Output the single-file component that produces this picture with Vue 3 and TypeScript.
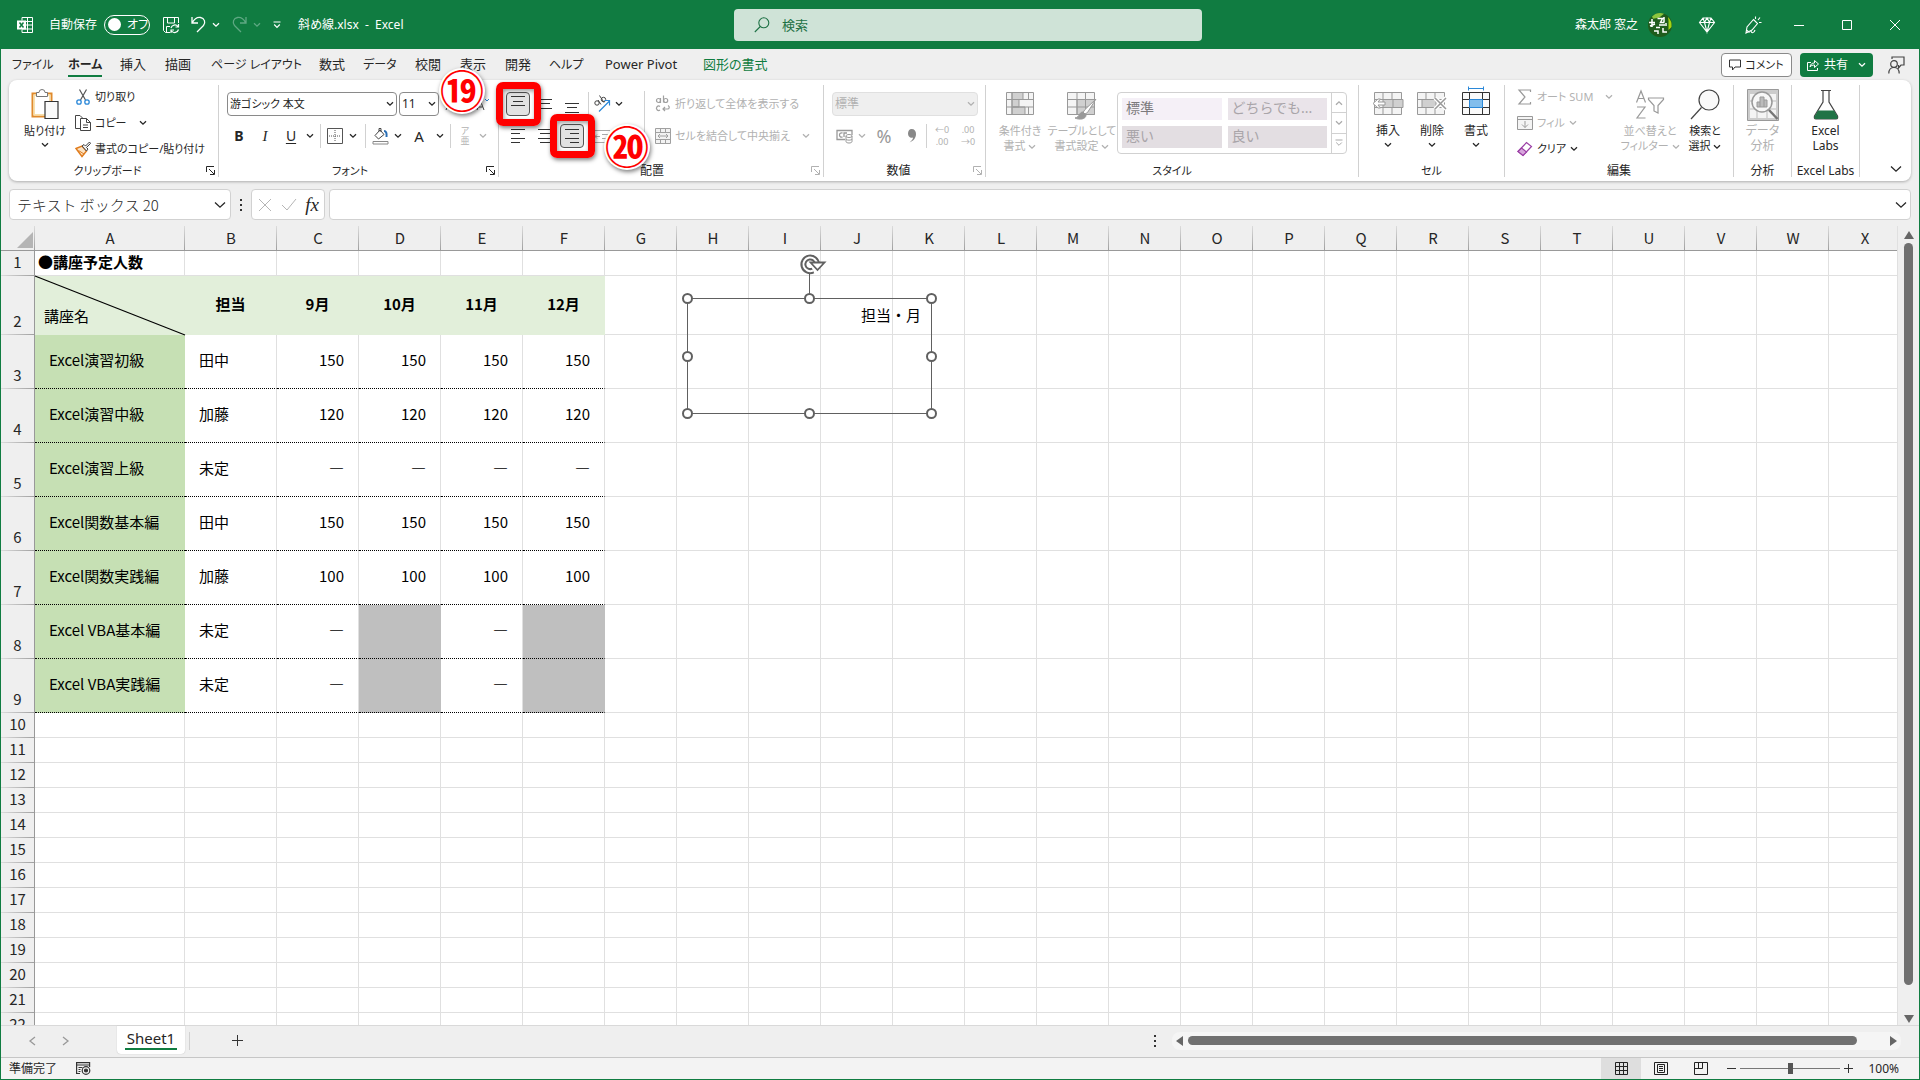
<script setup lang="ts">
import { h, ref } from 'vue'

interface Row {
  n: number
  height: number
  kind: 'title' | 'head' | 'data' | 'empty'
  cells: string[]
}

const Chevron = () =>
  h('svg', { width: 8, height: 6, viewBox: '0 0 8 6', fill: 'none', stroke: 'currentColor', 'stroke-width': 1.3, 'aria-hidden': 'true' }, [
    h('path', { d: 'M1 1.2 4 4.2 7 1.2' }),
  ])

const WideChevron = () =>
  h('svg', { width: 12, height: 8, viewBox: '0 0 12 8', fill: 'none', stroke: 'currentColor', 'stroke-width': 1.3, 'aria-hidden': 'true' }, [
    h('path', { d: 'M1 1.5 6 6.2 11 1.5' }),
  ])

const Launcher = () =>
  h('svg', { width: 9, height: 9, viewBox: '0 0 9 9', fill: 'none', stroke: 'currentColor', 'aria-hidden': 'true' }, [
    h('path', { d: 'M.5 6V.5H8M3 3l5 5M8.5 4v4.5H4' }),
  ])

const tabs = [
  { name: 'ファイル', width: 56, kana: true },
  { name: 'ホーム', width: 52, kana: true },
  { name: '挿入', width: 45 },
  { name: '描画', width: 46 },
  { name: 'ページ レイアウト', width: 108, kana: true },
  { name: '数式', width: 44 },
  { name: 'データ', width: 52, kana: true },
  { name: '校閲', width: 45 },
  { name: '表示', width: 45 },
  { name: '開発', width: 44 },
  { name: 'ヘルプ', width: 56, kana: true },
  { name: 'Power Pivot', width: 98 },
  { name: '図形の書式', width: 74 },
]
const activeTab = ref('ホーム')

const widths = [150, 92, 82, 82, 82, 82, ...Array.from({ length: 18 }, () => 72)]
const columns = widths.map((width, i) => ({ name: String.fromCharCode(65 + i), width }))
const tableWidth = widths.reduce((sum, w) => sum + w, 34)

const data: string[][] = [
  ['Excel演習初級', '田中', '150', '150', '150', '150'],
  ['Excel演習中級', '加藤', '120', '120', '120', '120'],
  ['Excel演習上級', '未定', '―', '―', '―', '―'],
  ['Excel関数基本編', '田中', '150', '150', '150', '150'],
  ['Excel関数実践編', '加藤', '100', '100', '100', '100'],
  ['Excel VBA基本編', '未定', '―', '', '―', ''],
  ['Excel VBA実践編', '未定', '―', '', '―', ''],
]

const rows: Row[] = [
  { n: 1, height: 25, kind: 'title', cells: ['●講座予定人数'] },
  { n: 2, height: 59, kind: 'head', cells: ['講座名', '担当', '9月', '10月', '11月', '12月'] },
  ...data.map((cells, i): Row => ({ n: i + 3, height: 54, kind: 'data', cells })),
  ...Array.from({ length: 13 }, (_, i): Row => ({ n: i + 10, height: 25, kind: 'empty', cells: [] })),
]

function cellClass(row: Row, col: number): string[] {
  if (col > 5 || row.kind === 'empty') return []
  if (row.kind === 'title') return col === 0 ? ['sheet-title'] : []
  if (row.kind === 'head') return ['head', col === 0 ? 'corner' : 'head-label']
  const out = ['body']
  if (col === 0) out.push('course')
  else if (col === 1) out.push('person')
  else out.push('count')
  if (col > 1 && !row.cells[col]) out.push('blocked')
  return out
}

const handles = [
  [6, 40], [128, 40], [250, 40],
  [6, 98], [250, 98],
  [6, 155], [128, 155], [250, 155],
]

const font = ref('游ゴシック 本文')
const fontSize = ref('11')
const autoSave = ref(false)
const zoom = ref(50)
</script>

<template>
  <div class="window">
    <header class="titlebar">
      <div class="title-left">
        <svg class="app-icon" width="16" height="16" viewBox="0 0 16 16" fill="none" stroke="#fff" aria-hidden="true">
          <path d="M5 3.5V.5h10.500v15H5v-3M5 4.500h10.500M8 8h7.500M5 12h10.500M10.500.500v15" />
          <rect x="0" y="3.500" width="9" height="9" fill="#fff" stroke="none" />
          <path d="M2.500 5.500l4 5M6.500 5.500l-4 5" stroke="#107c41" stroke-width="1.500" />
        </svg>
        <label class="autosave">
          <span>自動保存</span>
          <input v-model="autoSave" type="checkbox" />
          <span class="switch"><i></i>オフ</span>
        </label>
        <button class="qat save" aria-label="上書き保存">
          <svg width="16" height="16" viewBox="0 0 16 16" fill="none" stroke="#fff"><path d="M7 15.500H2.500L.500 13.500V.500h15V6M4.500.500V6h7V.500M3.500 15V9.500H7" /><path d="M8 11a4 4 0 0 1 7-1.500M15.500 7v3h-3M15.500 12.500a4 4 0 0 1-7 1.500M8 16v-3h3" stroke-width="1.200" /></svg>
        </button>
        <button class="qat undo" aria-label="元に戻す">
          <svg width="15" height="17" viewBox="0 0 15 17" fill="none" stroke="#fff" stroke-width="1.300"><path d="M1 1v6h6M1.300 6.700C3 3.500 6 1 9.500 1.500c4 .600 5.500 5 3 8L6 16" /></svg>
          <Chevron />
        </button>
        <button class="qat redo" aria-label="やり直し">
          <svg width="15" height="17" viewBox="0 0 15 17" fill="none" stroke="currentColor" stroke-width="1.300"><path d="M14 1v6H8M13.700 6.700C12 3.500 9 1 5.500 1.500c-4 .600-5.500 5-3 8L9 16" /></svg>
          <Chevron />
        </button>
        <button class="qat more" aria-label="クイック アクセス ツール バーのユーザー設定">
          <svg width="8" height="8" viewBox="0 0 8 8" fill="none" stroke="#fff" stroke-width="1.200"><path d="M.500 1h7M1.200 3.500 4 6.300 6.800 3.500" /></svg>
        </button>
        <span class="doc-name">斜め線.xlsx&nbsp; -&nbsp; Excel</span>
      </div>
      <label class="search">
        <svg width="16" height="16" viewBox="0 0 16 16" fill="none" stroke="#1e7145" stroke-width="1.100" aria-hidden="true"><circle cx="9.800" cy="5.800" r="5" /><path d="M6.300 9.500.800 15" /></svg>
        <input type="text" placeholder="検索" aria-label="検索" />
      </label>
      <div class="title-right">
        <button class="account">
          <span>森太郎 窓之</span>
          <svg width="24" height="24" viewBox="0 0 24 24" aria-hidden="true">
            <circle cx="12" cy="12" r="12" fill="#1f5c1c" />
            <path d="M4 3.500A12 12 0 0 1 16 .700l-5 4-6 1z" fill="#8cc63f" />
            <path d="M20 4a12 12 0 0 1 3.500 10l-3 3V8z" fill="#a3d414" />
            <path d="M1 9.500h6M4 6v8M2 13l5-2M9.500 5.500h5l-2 4h4M16 4v5M11 12h6M8 14.500h4M6 18h4v3M15 15v4h4M18 10v3" stroke="#fff" stroke-width="1.500" fill="none" />
          </svg>
        </button>
        <button class="tb" aria-label="Premium">
          <svg width="16" height="16" viewBox="0 0 16 16" fill="none" stroke="#fff" stroke-width="1.100"><path d="M4 1h8l3.500 4.500L8 15 .500 5.500zM.500 5.500h15M5.500 5.500 8 15l2.500-9.500M4 1l1.500 4.500L8 1l2.500 4.500L12 1" /></svg>
        </button>
        <button class="tb pen" aria-label="新機能">
          <svg width="17" height="18" viewBox="0 0 17 18" fill="none" stroke="#fff" stroke-width="1.100"><path d="M8.500 3.500 12.500 7.500 7 14 1 17 2 11zM1.500 14l3 2.500M6 14.500c0 3 3 3 4-.500M10.500 3V.500M13 4l2-2.500M14 6.500h2.500" /></svg>
        </button>
        <button class="tb" aria-label="最小化"><svg width="10" height="10" viewBox="0 0 10 10" stroke="#fff"><path d="M0 5.500h10" /></svg></button>
        <button class="tb" aria-label="最大化"><svg width="10" height="10" viewBox="0 0 10 10" fill="none" stroke="#fff"><path d="M.500.500h9v9h-9z" /></svg></button>
        <button class="tb" aria-label="閉じる"><svg width="10" height="10" viewBox="0 0 10 10" stroke="#fff"><path d="M0 0l10 10M10 0 0 10" /></svg></button>
      </div>
    </header>

    <nav class="tabs">
      <button
        v-for="t in tabs"
        :key="t.name"
        class="tab"
        :class="{ active: t.name === activeTab, contextual: t.name === '図形の書式', kana: t.kana }"
        :style="{ width: t.width + 'px' }"
        @click="activeTab = t.name"
      ><span>{{ t.name }}</span></button>
      <div class="tabs-right">
        <button class="comment">
          <svg width="12" height="12" viewBox="0 0 12 12" fill="none" stroke="#333"><path d="M.500 1h11v7H6l-2.500 3V8h-3z" /></svg>
          コメント
        </button>
        <button class="share">
          <svg width="12" height="12" viewBox="0 0 12 12" fill="none" stroke="#fff"><path d="M4 3.500H.500v8h10V9M3 8c.500-3 2-4 4.500-4V1.500l4 3.500-4 3.500V6C5.500 6 4 6.500 3 8z" /></svg>
          共有
          <Chevron />
        </button>
        <button class="presence" aria-label="入力候補">
          <svg width="17" height="18" viewBox="0 0 17 18" fill="none" stroke="#444" stroke-width="1.200"><circle cx="6" cy="8" r="3.300" /><path d="M.800 17.500c0-4 2.200-6 5.200-6s5.200 2 5.200 6M4 3V1h12v8h-3l-2.500 3V9" /></svg>
        </button>
      </div>
    </nav>

    <section class="ribbon" aria-label="リボン">
      <div class="group g-clip">
        <div class="cmds">
          <button class="big paste">
            <svg width="28" height="32" viewBox="0 0 28 32" fill="none">
              <path d="M1.500 4.500h19v23h-19z" fill="#fff" stroke="#e08a2c" stroke-width="2" />
              <path d="M3.200 6.200h15.600v19.600H3.200z" stroke="#f8dfa8" stroke-width="1.500" />
              <path d="M5.500 7.500v-4H8a3 3 0 0 1 6 0h2.500v4z" fill="#fff" stroke="#777" />
              <path d="M14 12.500h13v17H14z" fill="#fafafa" stroke="#333" stroke-width="1.200" />
            </svg>
            <span>貼り付け</span>
            <Chevron />
          </button>
          <div class="rows3">
            <button class="item">
              <svg class="ico" width="16" height="16" viewBox="0 0 16 16" fill="none"><path d="M4.500.500 10.500 11M11.500.500 5.500 11" stroke="#555" stroke-width="1.200" /><circle cx="4" cy="13" r="2.200" stroke="#2b88d8" stroke-width="1.300" /><circle cx="12" cy="13" r="2.200" stroke="#2b88d8" stroke-width="1.300" /></svg>
              切り取り
            </button>
            <button class="item">
              <svg class="ico" width="16" height="16" viewBox="0 0 16 16" fill="none" stroke="#444"><path d="M5 13.500H.500v-13H5l3 3M5.500 3.500h6l4 4v8h-10zM11.500 3.500v4h4M8 10h5M8 12.500h5" /></svg>
              コピー <i class="sp"></i><Chevron />
            </button>
            <button class="item">
              <svg class="ico" width="16" height="16" viewBox="0 0 16 16" fill="none"><path d="M1 7.500 7 5l4.500 5L7 15.500z" fill="#fbe3c4" stroke="#e07b1c" stroke-width="1.400" /><path d="M3.500 9.500 9 13" stroke="#e07b1c" /><path d="M7 5l2-1.500 1.500 1.500 4-4 1 1.500-4 4L13 8l-1.500 2z" fill="#eee" stroke="#444" /></svg>
              書式のコピー/貼り付け
            </button>
          </div>
        </div>
        <div class="caption kana"><span>クリップボード</span><button class="launch" aria-label="クリップボードの詳細"><Launcher /></button></div>
      </div>

      <div class="group g-font">
        <div class="rows2">
          <div class="line">
            <label class="pick font-pick"><select v-model="font" aria-label="フォント"><option>游ゴシック 本文</option></select><Chevron /></label>
            <label class="pick size-pick"><select v-model="fontSize" aria-label="フォント サイズ"><option>11</option></select><Chevron /></label>
            <button class="b20 grow" aria-label="フォント サイズの拡大"><svg width="16" height="16" viewBox="0 0 16 16" fill="none" stroke="#444"><path d="M1 14 5.500 3 10 14M2.500 10.500h6" /><path d="m11 5 2-2 2 2" stroke="#2b88d8" /></svg></button>
            <button class="b20" aria-label="フォント サイズの縮小"><svg width="16" height="16" viewBox="0 0 16 16" fill="none" stroke="#444"><path d="M2 14 5.500 5 9 14M3.500 11h4" /><path d="m10 3 2 2 2-2" stroke="#2b88d8" /></svg></button>
          </div>
          <div class="line">
            <button class="b26 bold">B</button>
            <button class="b26 italic">I</button>
            <button class="b26 under">U</button>
            <button class="b12" aria-label="下線の種類"><Chevron /></button>
            <i class="sep"></i>
            <button class="b20" aria-label="罫線"><svg width="16" height="16" viewBox="0 0 16 16" fill="none" stroke="#555"><path d="M.500.500h15v15H.500z" /><path d="M8 2v12M2 8h12" stroke-dasharray="1 1" /></svg></button>
            <button class="b16" aria-label="罫線の種類"><Chevron /></button>
            <i class="sep"></i>
            <button class="b20" aria-label="塗りつぶしの色"><svg width="17" height="18" viewBox="0 0 17 18" fill="none"><path d="M3 8.500 8 3l4 4.500-5.500 4.500zM7 4.500V1.500h2V5" stroke="#444" /><path d="M12 4c2 0 3 2 2.500 6" stroke="#2b6fb5" stroke-width="2" /><path d="M1 14.500h15v2.500H1z" fill="#fff" stroke="#888" /></svg></button>
            <button class="b16" aria-label="色の一覧"><Chevron /></button>
            <button class="b26 letter">A</button>
            <button class="b16" aria-label="フォントの色"><Chevron /></button>
            <i class="sep flush"></i>
            <button class="b24 ruby off" disabled><span>ア</span><span>亜</span></button>
            <button class="b12 off" disabled aria-label="ふりがなの設定"><Chevron /></button>
          </div>
        </div>
        <div class="caption kana"><span>フォント</span><button class="launch" aria-label="フォントの設定"><Launcher /></button></div>
      </div>

      <div class="group g-align">
        <div class="cmds">
          <div class="rows2">
            <div class="line gap1">
              <button class="b26 pressed" aria-label="上揃え"><svg width="14" height="20" viewBox="0 0 14 20" stroke="#333"><path d="M0 2.500h14M2 7.500h10M0 11.500h14" /></svg></button>
              <button class="b26" aria-label="上下中央揃え"><svg width="14" height="20" viewBox="0 0 14 20" stroke="#333"><path d="M0 5.500h14M2 9.500h10M0 14.500h14" /></svg></button>
              <button class="b26" aria-label="下揃え"><svg width="14" height="20" viewBox="0 0 14 20" stroke="#333"><path d="M0 9.500h14M2 13.500h10M0 18.500h14" /></svg></button>
              <i class="sep flush"></i>
              <button class="b20" aria-label="方向"><svg width="18" height="18" viewBox="0 0 18 18" fill="none"><g stroke="#444"><circle cx="4" cy="8" r="2.200" /><path d="m5 5 3 4.500M6.500.500l4.500 7" /><circle cx="10.500" cy="4.500" r="2.200" /></g><path d="M6 16.500 16.500 6M11.500 5.500h5v5" stroke="#2b88d8" stroke-width="1.200" /></svg></button>
              <button class="b12" aria-label="方向の種類"><Chevron /></button>
            </div>
            <div class="line gap1">
              <button class="b26" aria-label="左揃え"><svg width="14" height="20" viewBox="0 0 14 20" stroke="#333"><path d="M0 3.500h14M0 7.500h9M0 12.500h14M0 16.500h9" /></svg></button>
              <button class="b26" aria-label="中央揃え"><svg width="14" height="20" viewBox="0 0 14 20" stroke="#333"><path d="M0 3.500h14M2 7.500h10M0 12.500h14M2 16.500h10" /></svg></button>
              <button class="b26 pressed" aria-label="右揃え"><svg width="14" height="20" viewBox="0 0 14 20" stroke="#333"><path d="M0 3.500h14M5 7.500h9M0 12.500h14M5 16.500h9" /></svg></button>
              <i class="sep flush"></i>
              <button class="b20 off" disabled aria-label="インデントを減らす"><svg width="16" height="16" viewBox="0 0 16 16" fill="none" stroke="#aaa"><path d="M0 2.500h16M8 6.500h8M8 10.500h8M0 14.500h16M6 8.500H1M3 6.500l-2 2 2 2" /></svg></button>
            </div>
          </div>
          <i class="tall-sep"></i>
          <div class="rows2">
            <button class="item off" disabled>
              <svg class="ico" width="16" height="18" viewBox="0 0 16 18" fill="none" stroke="#a0a0a0" stroke-width="1.200"><circle cx="3.500" cy="5.500" r="2" /><path d="M5.500 3v5M8.500.500v7M5 11.500a2.200 2.200 0 1 0 0 3.500" /><circle cx="10.700" cy="5.500" r="2" /><path d="M13 10.500c2 1 1.500 3.500-.500 3.500H8M10 12l-2 2 2 2" /></svg>
              折り返して全体を表示する
            </button>
            <button class="item off" disabled>
              <svg class="ico" width="16" height="16" viewBox="0 0 16 16" fill="#f3f3f3" stroke="#a0a0a0"><path d="M.500.500h15v15H.500zM.500 4.500h15M.500 11.500h15M5.500.500v4M10.500.500v4M5.500 11.500v4M10.500 11.500v4M3 8h10M5 6 3 8l2 2M11 6l2 2-2 2" /></svg>
              セルを結合して中央揃え<i class="sp"></i><Chevron />
            </button>
          </div>
        </div>
        <div class="caption"><span>配置</span><button class="launch off" disabled aria-label="配置の設定"><Launcher /></button></div>
        <div class="mark mark-top"></div>
        <div class="mark mark-right"></div>
        <div class="badge badge-top"><span>⑲</span></div>
        <div class="badge badge-right"><span>⑳</span></div>
      </div>

      <div class="group g-num">
        <div class="rows2">
          <label class="pick num-pick off"><select disabled aria-label="表示形式"><option>標準</option></select><Chevron /></label>
          <div class="line">
            <button class="b24 off" disabled aria-label="通貨表示形式"><svg width="17" height="16" viewBox="0 0 17 16" fill="none" stroke="#999"><path d="M9 11.500H1v-9h15V7M6.500 5c-4-1-4 5 0 4M8 9V5h3" stroke-width="1.300" /><path d="M10 8v5.500c0 2 6 2 6 0V8c0-2-6-2-6 0s6 2 6 0M10 11c0 1.500 6 1.500 6 0" fill="#fff" /></svg></button>
            <button class="b12 off" disabled aria-label="通貨の種類"><Chevron /></button>
            <button class="b32 off percent" disabled>%</button>
            <button class="b24 off" disabled aria-label="桁区切り"><svg width="10" height="14" viewBox="0 0 10 14" fill="#888"><path d="M4.500 0C7.500 0 9 2 9 5c0 4-2.500 7-6.500 8.500C5 11.500 6 10 6 8.500 3 9.300 1 7.500 1 4.500 1 2 2.500 0 4.500 0z" /></svg></button>
            <i class="sep flush"></i>
            <button class="b26 off decimals" disabled><span>←0</span><span>.00</span></button>
            <button class="b26 off decimals" disabled><span>.00</span><span>→0</span></button>
          </div>
        </div>
        <div class="caption"><span>数値</span><button class="launch off" disabled aria-label="数値の設定"><Launcher /></button></div>
      </div>

      <div class="group g-style">
        <div class="cmds">
          <button class="big off w60" disabled>
            <svg width="28" height="32" viewBox="0 0 28 32" fill="none" stroke="#999"><path d="M.500 3.500h27v22H.500z" fill="#f4f4f4" /><path d="M6 3.500h11v7H6zM6 18h13v7.500H6zM6 10.500h7V18H6z" fill="#d0d0d0" /><path d="M.500 10.500h27M.500 18h27M6 3.500v22M22.500 3.500v7M22.500 18v7.500" /></svg>
            <span>条件付き<br />書式 <Chevron /></span>
          </button>
          <button class="big off w64" disabled>
            <svg width="30" height="32" viewBox="0 0 30 32" fill="none" stroke="#999"><path d="M.500 3.500h27v22H.500z" fill="#f4f4f4" /><path d="M10 10.500h17.500v15H10z" fill="#d0d0d0" /><path d="M.500 10.500h27M.500 18h27M10 3.500v22M18.500 3.500v22" /><path d="M29 10 18 20.500l-2 3 2 1.500 2.500-1.500z" fill="#fff" /><path d="M16 23c-4 0-3 5-8 6 4 2 11 1.500 11-3z" fill="#999" /></svg>
            <span>テーブルとして<br />書式設定 <Chevron /></span>
          </button>
          <div class="gallery">
            <div class="swatches">
              <button class="sw normal" disabled>標準</button>
              <button class="sw neutral" disabled>どちらでも...</button>
              <button class="sw bad" disabled>悪い</button>
              <button class="sw bad" disabled>良い</button>
            </div>
            <div class="steps">
              <button disabled aria-label="上へ"><Chevron class="flip" /></button>
              <button disabled aria-label="下へ"><Chevron /></button>
              <button disabled aria-label="その他"><svg width="8" height="8" viewBox="0 0 8 8" fill="none" stroke="currentColor"><path d="M.500 1h7M1.200 3.500 4 6.300 6.800 3.500" /></svg></button>
            </div>
          </div>
        </div>
        <div class="caption kana"><span>スタイル</span></div>
      </div>

      <div class="group g-cell">
        <div class="cmds">
          <button class="big w44">
            <svg width="32" height="32" viewBox="0 0 32 32" fill="none" stroke="#999"><path d="M2.500 3.500h27v22h-27z" fill="#f4f4f4" /><path d="M2.500 10.500h27M2.500 18.500h27M11 3.500v7M20 3.500v7M11 18.500v7M20 18.500v7" /><path d="M11 10.500h20v8H11z" fill="#d0d0d0" /><path d="M21 10.500v8" /><path d="M13 13v3H6l2.500 3H6l-5-4.500L6 10h2.500L6 13z" fill="#fff" /></svg>
            <span>挿入</span><Chevron />
          </button>
          <button class="big w44">
            <svg width="30" height="32" viewBox="0 0 30 32" fill="none" stroke="#999"><path d="M.500 3.500h27v22H.500z" fill="#f4f4f4" /><path d="M.500 10.500h27M.500 18.500h27M9 3.500v7M18 3.500v7M9 18.500v7M18 18.500v7" /><path d="M5 10.500h14v8H5z" fill="#d0d0d0" /><path d="m18 9 11 11M29 9 18 20" stroke="#fff" stroke-width="4" /><path d="m18 9 11 11M29 9 18 20" stroke-width="1.500" /></svg>
            <span>削除</span><Chevron />
          </button>
          <button class="big w44">
            <svg width="28" height="32" viewBox="0 0 28 32" fill="none" stroke="#333"><path d="M.500 3.500h27v22H.500z" fill="#fafafa" /><path d="M.500 10.500h27M.500 18.500h27M7.500 3.500v22M20.500 3.500v22" /><path d="M7.500 10.500h13v8h-13z" fill="#83beec" stroke="#2b88d8" /><path d="M6.500-.500h15M6.500-2.500v4M21.500-2.500v4" stroke="#2b88d8" /></svg>
            <span>書式</span><Chevron />
          </button>
        </div>
        <div class="caption kana"><span>セル</span></div>
      </div>

      <div class="group g-edit">
        <div class="cmds">
          <div class="rows3">
            <button class="item off" disabled><svg class="ico" width="16" height="16" viewBox="0 0 16 16" fill="none" stroke="#999" stroke-width="1.200"><path d="M13.500 3V1H2l6 7-6 7h11.500v-2" /></svg>オート SUM<i class="sp"></i><Chevron /></button>
            <button class="item off" disabled><svg class="ico" width="16" height="16" viewBox="0 0 16 16" fill="#f4f4f4" stroke="#999"><path d="M.500 1.500h15v13H.500zM.500 4.500h15M8 6v6.500M5 9.500l3 3 3-3" /></svg>フィル <Chevron /></button>
            <button class="item"><svg class="ico" width="16" height="16" viewBox="0 0 16 16" fill="none" stroke="#9b3fa5" stroke-width="1.200"><path d="M1 10.500 9.500 1.500l5 4L6 14.500z" fill="#fff" /><path d="M1 10.500 4.500 7l5 4L6 14.500z" fill="#d8a6dd" /></svg>クリア <Chevron /></button>
          </div>
          <button class="big off w58" disabled>
            <svg width="30" height="32" viewBox="0 0 30 32" fill="none" stroke="#999" stroke-width="1.200"><path d="M1.500 13.500 6 2l4.500 11.500M3 9.500h6M2 18h8L2 29h8.500M13.500 9h15v1.500l-5.500 6V24l-4-2v-5.500l-5.500-6z" /></svg>
            <span>並べ替えと<br />フィルター <Chevron /></span>
          </button>
          <button class="big w50">
            <svg width="30" height="32" viewBox="0 0 30 32" fill="none" stroke="#444" stroke-width="1.200"><circle cx="19" cy="11" r="10" fill="#fafafa" /><path d="M11.500 18.500 1 30" /></svg>
            <span>検索と<br />選択 <Chevron /></span>
          </button>
        </div>
        <div class="caption"><span>編集</span></div>
      </div>

      <div class="group g-data">
        <button class="big off wide" disabled>
          <svg width="32" height="32" viewBox="0 0 32 32" fill="none" stroke="#999"><path d="M.500.500h31v31H.500z" fill="#ccc" /><path d="M3 5h26v24H3z" fill="#f4f4f4" stroke="none" /><path d="M3 12h26M3 20h26M10 5v24M20 5v24" stroke="#bbb" /><circle cx="15" cy="13" r="10" fill="#f7f7f7" stroke-width="1.500" /><path d="m22 21 8.500 9" stroke-width="2.500" stroke="#777" /><path d="M10 18v-5h3V8h4v3h3v7z" fill="#bbb" /><path d="M13 13v5M17 11v7" /></svg>
          <span>データ<br />分析</span>
        </button>
        <div class="caption"><span>分析</span></div>
      </div>

      <div class="group g-labs">
        <button class="big wide">
          <svg width="26" height="32" viewBox="0 0 26 32" fill="none"><path d="M8 1.500h10M10 1.500V13L1.500 27c-.500 2 0 3 1.500 3h20c1.500 0 2-1 1.500-3L16 13V1.500" stroke="#444" stroke-width="1.200" fill="#fff" /><path d="M5 21.500h16l3.500 6c.300 1.500 0 2.500-1.500 2.500H3c-1.500 0-1.800-1-1.500-2.500z" fill="#217346" /></svg>
          <span>Excel<br />Labs</span>
        </button>
        <div class="caption"><span>Excel Labs</span></div>
      </div>
      <button class="collapse" aria-label="リボンを折りたたむ"><WideChevron /></button>
    </section>

    <section class="formula">
      <label class="namebox"><input type="text" value="テキスト ボックス 20" aria-label="名前ボックス" /><WideChevron /></label>
      <svg class="dots" width="3" height="12" viewBox="0 0 3 12" fill="#333" aria-hidden="true"><path d="M0 0h2v2H0zM0 5h2v2H0zM0 10h2v2H0z" /></svg>
      <div class="fx">
        <button aria-label="キャンセル" disabled><svg width="14" height="14" viewBox="0 0 14 14" stroke="#b5b5b5"><path d="m1 1 12 12M13 1 1 13" /></svg></button>
        <button aria-label="入力" disabled><svg width="16" height="14" viewBox="0 0 16 14" fill="none" stroke="#b5b5b5"><path d="m1 7 5 5L15 1" /></svg></button>
        <button class="fx-letter">fx</button>
      </div>
      <label class="bar"><input type="text" aria-label="数式バー" /><WideChevron /></label>
    </section>

    <main class="sheet-area">
      <div class="sheet">
        <table :style="{ width: tableWidth + 'px' }">
          <colgroup>
            <col class="rail" />
            <col v-for="c in columns" :key="c.name" :style="{ width: c.width + 'px' }" />
          </colgroup>
          <thead>
            <tr>
              <th class="all"><svg width="16" height="16" viewBox="0 0 16 16" aria-hidden="true"><path d="M16 0v16H0z" fill="#b4b4b4" /></svg></th>
              <th v-for="c in columns" :key="c.name" scope="col">{{ c.name }}</th>
            </tr>
          </thead>
          <tbody>
            <tr v-for="r in rows" :key="r.n" :style="{ height: r.height + 'px' }">
              <th scope="row">{{ r.n }}</th>
              <td v-for="(c, i) in columns" :key="c.name" :class="cellClass(r, i)">
                <svg v-if="r.kind === 'head' && i === 0" class="slash" viewBox="0 0 150 59" preserveAspectRatio="none" aria-hidden="true"><path d="M0 0 150 59" stroke="#000" stroke-width="1.200" /></svg>{{ r.cells[i] }}</td>
            </tr>
          </tbody>
        </table>
        <div class="textbox">
          <span>担当・月</span>
          <svg width="256" height="162" viewBox="0 0 256 162" fill="none" stroke="#606060" aria-hidden="true">
            <path d="M6.500 40.500h244v115H6.500zM128.500 16v24" />
            <circle v-for="([x, y], i) in handles" :key="i" :cx="x + 0.5" :cy="y + 0.5" r="4.500" fill="#fff" stroke-width="2" />
            <path d="M132 12.500a6.800 6.800 0 1 1 4-6.500" stroke-width="6" />
            <path d="M132 12.500a6.800 6.800 0 1 1 4-6.500" stroke="#fff" stroke-width="2" />
            <path d="M129.500 4.500h14l-7 7.500z" fill="#fff" stroke-width="1.800" />
          </svg>
        </div>
      </div>
      <div class="vscroll" aria-hidden="true">
        <svg width="10" height="8" viewBox="0 0 10 8"><path d="M5 0l5 8H0z" fill="#666" /></svg>
        <div class="vthumb"></div>
        <svg width="10" height="8" viewBox="0 0 10 8"><path d="M0 0h10L5 8z" fill="#666" /></svg>
      </div>
    </main>

    <div class="sheetbar">
      <button class="nav" aria-label="前のシート"><svg width="7" height="10" viewBox="0 0 7 10" fill="none" stroke="#999" stroke-width="1.300"><path d="M6 1 1 5l5 4" /></svg></button>
      <button class="nav" aria-label="次のシート"><svg width="7" height="10" viewBox="0 0 7 10" fill="none" stroke="#999" stroke-width="1.300"><path d="m1 1 5 4-5 4" /></svg></button>
      <button class="sheet-tab"><span>Sheet1</span></button>
      <i class="tab-sep"></i>
      <button class="add" aria-label="新しいシート"><svg width="11" height="11" viewBox="0 0 11 11" stroke="#333"><path d="M5.500 0v11M0 5.500h11" /></svg></button>
      <svg class="hdots" width="3" height="12" viewBox="0 0 3 12" fill="#333" aria-hidden="true"><path d="M0 0h2v2H0zM0 5h2v2H0zM0 10h2v2H0z" /></svg>
      <div class="hscroll" aria-hidden="true">
        <svg width="7" height="10" viewBox="0 0 7 10"><path d="M7 0v10L0 5z" fill="#666" /></svg>
        <div class="htrack"><div class="hthumb"></div></div>
        <svg width="7" height="10" viewBox="0 0 7 10"><path d="M0 0v10l7-5z" fill="#666" /></svg>
      </div>
    </div>

    <footer class="status">
      <span>準備完了</span>
      <button class="macro" aria-label="マクロの記録"><svg width="15" height="13" viewBox="0 0 15 13" fill="none" stroke="#333" stroke-width="1.200"><path d="M4 11.500H.600V.600h13V5M.600 3h13M2.500 5.500h4M2.500 7.500h2M2.500 9.500h2" /><circle cx="10" cy="8.500" r="3.800" /><circle cx="10" cy="8.500" r="1.500" fill="#333" /></svg></button>
      <div class="views">
        <button class="on" aria-label="標準"><svg width="13" height="13" viewBox="0 0 13 13" fill="none" stroke="#222"><path d="M.500.500h12v12H.500zM.500 4.500h12M.500 8.500h12M4.500.500v12M8.500.500v12" /></svg></button>
        <button aria-label="ページ レイアウト"><svg width="14" height="13" viewBox="0 0 14 13" fill="none" stroke="#222"><path d="M.500.500h13v12H.500zM3.500 2.500h7v8h-7zM5 4.500h4M5 6.500h4M5 8.500h4" /></svg></button>
        <button aria-label="改ページ プレビュー"><svg width="14" height="13" viewBox="0 0 14 13" fill="none" stroke="#222"><path d="M.500.500h13v12H.500zM.500 6.500h8v-6M4.500.500v6" /></svg></button>
      </div>
      <button class="step" aria-label="縮小"><svg width="9" height="9" viewBox="0 0 9 9" stroke="#333"><path d="M0 4.500h9" /></svg></button>
      <input v-model="zoom" class="zoom" type="range" min="0" max="100" aria-label="ズーム" />
      <button class="step" aria-label="拡大"><svg width="9" height="9" viewBox="0 0 9 9" stroke="#333"><path d="M0 4.500h9M4.500 0v9" /></svg></button>
      <span class="percent-text">100%</span>
    </footer>
  </div>
</template>

<style>
body {
  margin: 0;
}
</style>

<style scoped>
.window {
  box-sizing: border-box;
  display: flex;
  flex-direction: column;
  height: 100vh;
  border: 1px solid #107c41;
  border-top: 0;
  background: #efefef;
  color: #262626;
  font-family: 'Noto Sans', 'Noto Sans CJK JP', sans-serif;
  font-size: 12px;
  line-height: 16px;
  font-feature-settings: 'palt';
  overflow: hidden;
}
.window * {
  box-sizing: border-box;
}
svg {
  display: block;
  flex: none;
  overflow: visible;
}
button {
  display: flex;
  align-items: center;
  justify-content: center;
  padding: 0;
  border: 0;
  background: none;
  color: inherit;
  font: inherit;
  font-feature-settings: inherit;
  white-space: nowrap;
}
input,
select {
  border: 0;
  padding: 0;
  background: none;
  color: inherit;
  font: inherit;
  font-feature-settings: inherit;
  outline: none;
  min-width: 0;
}
.off {
  color: #b1b1b1;
}

/* title bar */
.titlebar {
  display: flex;
  align-items: center;
  height: 49px;
  flex: none;
  background: #107c41;
  color: #fff;
}
.title-left,
.title-right {
  display: flex;
  flex: 1 1 0;
  align-items: center;
  min-width: 0;
}
.app-icon {
  margin-left: 16px;
}
.autosave {
  display: flex;
  align-items: center;
  gap: 7px;
  margin-left: 16px;
}
.autosave input {
  position: absolute;
  opacity: 0;
}
.switch {
  display: flex;
  align-items: center;
  gap: 6px;
  width: 46px;
  height: 20px;
  padding-left: 3px;
  border: 1px solid #fff;
  border-radius: 10px;
}
.switch i {
  width: 13px;
  height: 13px;
  border-radius: 50%;
  background: #fff;
}
.qat {
  gap: 6px;
  height: 24px;
}
.save {
  margin-left: 13px;
}
.undo,
.redo {
  margin-left: 12px;
}
.redo {
  color: #5fa883;
}
.more {
  margin-left: 12px;
}
.doc-name {
  margin-left: 17px;
  white-space: nowrap;
}
.search {
  display: flex;
  align-items: center;
  gap: 12px;
  flex: 0 1 468px;
  height: 32px;
  margin-left: 16px;
  padding-left: 20px;
  border-radius: 4px;
  background: #cfe3d7;
}
.search input {
  flex: 1;
  font-size: 13px;
}
.search input::placeholder {
  color: #1e7145;
  opacity: 1;
}
.title-right {
  justify-content: flex-end;
}
.account {
  gap: 10px;
  margin-right: 11px;
}
.tb {
  width: 48px;
  height: 32px;
}
.pen {
  width: 44px;
}

/* tabs */
.tabs {
  display: flex;
  align-items: center;
  height: 31px;
  flex: none;
  padding-left: 11px;
  font-size: 13px;
}
.tab {
  justify-content: flex-start;
  height: 30px;
  flex: none;
}
.tab.kana {
  font-size: 12px;
}
.tab span {
  border-bottom: 2px solid transparent;
  border-top: 2px solid transparent;
  line-height: 21px;
}
.tab.active {
  font-weight: 700;
}
.tab.active span {
  border-bottom-color: #107c41;
}
.contextual {
  color: #107c41;
}
.tabs-right {
  display: flex;
  align-items: center;
  margin-left: auto;
  margin-right: 14px;
  font-size: 12px;
}
.comment {
  gap: 4px;
  width: 71px;
  height: 24px;
  border: 1px solid #8a8a8a;
  border-radius: 4px;
  background: #fff;
  font-size: 11px;
}
.share {
  gap: 5px;
  width: 73px;
  height: 24px;
  margin-left: 8px;
  border-radius: 4px;
  background: #107c41;
  color: #fff;
}
.share svg:last-child {
  margin-left: 5px;
}
.presence {
  margin-left: 15px;
}

/* ribbon */
.ribbon {
  display: flex;
  flex: none;
  height: 101px;
  margin: 0 8px;
  padding: 5px 0 4px;
  border-radius: 8px;
  background: #fff;
  box-shadow: 0 1px 3px rgba(0, 0, 0, 0.28);
}
.group {
  position: relative;
  display: flex;
  flex-direction: column;
  justify-content: space-between;
  border-right: 1px solid #d1d1d1;
  flex: none;
}
.g-clip {
  width: 210px;
}
.g-font {
  width: 280px;
  padding-left: 7px;
}
.g-align {
  width: 325px;
  padding-left: 6px;
}
.g-num {
  width: 162px;
  padding-left: 8px;
}
.g-style {
  width: 373px;
}
.g-cell {
  width: 146px;
}
.g-edit {
  width: 229px;
}
.g-data {
  width: 58px;
}
.g-labs {
  width: 68px;
}
.caption {
  position: relative;
  display: flex;
  justify-content: center;
  line-height: 12px;
  white-space: nowrap;
}
.caption.kana {
  font-size: 11px;
}
.g-font .caption,
.g-align .caption {
  padding-right: 24px;
}
.g-num .caption {
  padding-right: 20px;
}
.g-clip .caption {
  padding-right: 12px;
}
.launch {
  position: absolute;
  right: 3px;
  bottom: 2px;
}
.cmds {
  display: flex;
}
.rows2 {
  display: flex;
  flex-direction: column;
  gap: 8px;
  padding-top: 7px;
}
.rows3 {
  display: flex;
  flex-direction: column;
  flex: none;
  gap: 2px;
}
.line {
  display: flex;
  align-items: center;
  height: 24px;
}
.gap1 {
  gap: 1px;
}
.item {
  justify-content: flex-start;
  gap: 4px;
  height: 24px;
  font-size: 11px;
}
.sp {
  width: 4px;
}
.big {
  flex-direction: column;
  justify-content: flex-start;
  padding-top: 4px;
  line-height: 15px;
}
.big > svg:first-child {
  margin-bottom: 2px;
}
.big > svg:last-child {
  margin-top: 4px;
}
.big span svg {
  display: inline-block;
  vertical-align: middle;
}
.paste {
  width: 60px;
  margin-left: 6px;
  font-size: 11px;
}
.g-style .big,
.g-edit .big {
  font-size: 11px;
}
.wide {
  width: 100%;
}
.w44 {
  width: 44px;
}
.w50 {
  width: 50px;
}
.w58 {
  width: 58px;
}
.w60 {
  width: 60px;
}
.w64 {
  width: 64px;
}
.b12,
.b16,
.b20,
.b24,
.b26,
.b32 {
  height: 24px;
  flex: none;
}
.b12 {
  width: 12px;
}
.b16 {
  width: 16px;
}
.b20 {
  width: 20px;
}
.b24 {
  width: 24px;
}
.b26 {
  width: 26px;
}
.b32 {
  width: 32px;
}
.grow {
  margin: 0 10px 0 4px;
}
.bold {
  font-size: 14px;
  font-weight: 700;
}
.italic {
  font-family: 'Liberation Serif', serif;
  font-size: 15px;
  font-style: italic;
}
.under {
  font-size: 14px;
  text-decoration: underline;
  text-underline-offset: 2px;
}
.letter {
  font-size: 15px;
}
.ruby {
  flex-direction: column;
  font-size: 9px;
  line-height: 10px;
}
.decimals {
  flex-direction: column;
  font-size: 9px;
  line-height: 12px;
}
.percent {
  font-size: 18px;
  color: #999;
}
.sep {
  width: 1px;
  height: 24px;
  margin: 0 4px;
  background: #d1d1d1;
}
.sep.flush {
  margin: 0 2px;
}
.tall-sep {
  width: 1px;
  height: 42px;
  margin: 6px 10px 0 1px;
  background: #d1d1d1;
}
.g-align .cmds > .rows2:first-child {
  width: 138px;
}
.pressed {
  width: 24px;
  margin: 0 1px;
  border: 1px solid #555;
  border-radius: 4px;
  background: #e2e2e2;
}
.pick {
  position: relative;
  display: flex;
  align-items: center;
  height: 24px;
  padding: 0 2px;
  border: 1px solid #8a8a8a;
  border-radius: 4px;
}
.pick select {
  flex: 1;
  appearance: none;
}
.font-pick {
  width: 170px;
  margin: 0 2px 0 1px;
}
.font-pick select {
  font-size: 11px;
}
.size-pick {
  width: 40px;
}
.num-pick {
  width: 146px;
  border-color: #e0e0e0;
  background: #efefef;
}
.pick select:disabled {
  opacity: 1;
}
.mark {
  position: absolute;
  width: 45px;
  height: 44px;
  border: 7px solid #f00;
  border-radius: 7px;
  box-shadow: 1px 2px 4px rgba(0, 0, 0, 0.5), inset 1px 2px 4px rgba(0, 0, 0, 0.4);
}
.mark-top {
  left: -3px;
  top: -3px;
}
.mark-right {
  left: 51px;
  top: 29px;
}
.badge {
  position: absolute;
  display: flex;
  align-items: center;
  justify-content: center;
  width: 46px;
  height: 46px;
  border-radius: 50%;
  background: #fff;
  color: #f00;
  font-family: 'Noto Sans CJK JP', sans-serif;
  font-size: 44px;
  font-weight: 700;
  line-height: 42px;
  padding-bottom: 4px;
  box-shadow: 1px 2px 4px rgba(0, 0, 0, 0.5);
}
.badge-top {
  left: -60px;
  top: -17px;
}
.badge-right {
  left: 105px;
  top: 39px;
}
.g-style .cmds {
  padding-left: 4px;
}
.gallery {
  display: flex;
  width: 230px;
  height: 62px;
  margin: 7px 0 0 3px;
  border: 1px solid #d1d1d1;
  border-radius: 4px;
}
.swatches {
  display: grid;
  flex: 1;
  grid-template-columns: 1fr 1fr;
  gap: 6px;
  padding: 5px 4px;
}
.sw {
  justify-content: flex-start;
  padding: 0 0 2px 4px;
  color: #a9a5a9;
  font-size: 14px;
  font-feature-settings: normal;
  overflow: hidden;
}
.normal {
  background: #f5f0f7;
  color: #7c7a7d;
}
.neutral {
  background: #eae4ea;
}
.bad {
  background: #e3dee2;
}
.steps {
  display: flex;
  flex-direction: column;
  width: 15px;
  border-left: 1px solid #d1d1d1;
  color: #aaa;
}
.steps button {
  flex: 1;
}
.steps button + button {
  border-top: 1px solid #d1d1d1;
}
.flip {
  transform: rotate(180deg);
}
.g-cell .cmds {
  padding-left: 7px;
}
.g-edit .cmds {
  padding-left: 12px;
}
.g-edit .rows3 {
  width: 104px;
}
.g-edit .big + .big {
  margin-left: 1px;
}
.collapse {
  align-self: flex-end;
  margin: 0 9px 4px auto;
}

/* formula bar */
.formula {
  display: flex;
  align-items: center;
  flex: none;
  margin: 8px 8px 0;
  height: 31px;
}
.namebox,
.fx,
.bar {
  display: flex;
  align-items: center;
  height: 31px;
  border: 1px solid #d1d1d1;
  border-radius: 4px;
  background: #fff;
}
.namebox {
  width: 222px;
  padding: 0 4px 0 7px;
  font-family: 'Noto Sans CJK JP', sans-serif;
  font-size: 15px;
  font-feature-settings: normal;
  font-weight: 300;
}
.namebox input {
  flex: 1;
}
.dots {
  margin: 0 8px 0 9px;
}
.fx {
  width: 74px;
  padding-left: 1px;
}
.fx button {
  width: 24px;
}
.fx .fx-letter {
  font-family: 'Liberation Serif', serif;
  font-size: 19px;
  font-style: italic;
}
.bar {
  flex: 1;
  margin-left: 4px;
  padding: 0 3px;
}
.bar input {
  flex: 1;
}

/* sheet */
.sheet-area {
  display: flex;
  flex: 1;
  min-height: 0;
  margin-top: 6px;
}
.sheet {
  position: relative;
  flex: 1;
  min-width: 0;
  overflow: hidden;
  border-right: 1px solid #e0e0e0;
  background: #fff;
}
table {
  table-layout: fixed;
  border-collapse: separate;
  border-spacing: 0;
  color: #000;
  font-family: 'Noto Sans CJK JP', sans-serif;
  font-size: 15px;
  font-feature-settings: normal;
  line-height: 20px;
}
.rail {
  width: 34px;
}
th,
td {
  padding: 0;
  white-space: nowrap;
}
thead tr {
  height: 25px;
}
th {
  color: #262626;
  font-weight: 400;
  text-align: center;
}
thead th {
  border-bottom: 1px solid #999;
  background: linear-gradient(#dcdcdc, #a0a0a0) right / 1px 100% no-repeat #efefef;
}
.all svg {
  margin: 3px 2px 0 auto;
}
tbody th {
  padding-bottom: 4px;
  border-right: 1px solid #999;
  vertical-align: bottom;
  background: linear-gradient(90deg, #dcdcdc, #a0a0a0) bottom / 100% 1px no-repeat #efefef;
}
td {
  padding-bottom: 3px;
  border-right: 1px solid #e0e0e0;
  border-bottom: 1px solid #e0e0e0;
  vertical-align: middle;
}
.sheet-title {
  padding-left: 3px;
  font-weight: 700;
}
.head {
  border-color: #e2efda;
  background: #e2efda;
  text-align: center;
}
.head-label {
  font-weight: 700;
}
.corner {
  position: relative;
  padding: 0 0 8px 9px;
  text-align: left;
  vertical-align: bottom;
}
.slash {
  position: absolute;
  inset: 0;
  width: 150px;
  height: 59px;
}
.body {
  border-bottom: 1px dotted #000;
}
.course {
  padding-left: 14px;
  border-right: 0;
  background: #c6e0b4;
}
.person {
  padding-left: 14px;
}
.count {
  padding-right: 14px;
  text-align: right;
}
.blocked {
  border-right-color: #bfbfbf;
  background: #bfbfbf;
}
.textbox {
  position: absolute;
  left: 680px;
  top: 32px;
  width: 256px;
  height: 162px;
}
.textbox svg {
  position: absolute;
  inset: 0;
}
.textbox span {
  position: absolute;
  right: 16px;
  top: 47px;
  color: #000;
  font-family: 'Noto Sans CJK JP', sans-serif;
  font-size: 15px;
  line-height: 20px;
  font-feature-settings: normal;
}
.vscroll {
  display: flex;
  flex-direction: column;
  align-items: center;
  gap: 4px;
  width: 21px;
  padding: 5px 0 2px;
}
.vthumb {
  width: 9px;
  flex: 1;
  margin-bottom: 26px;
  border-radius: 5px;
  background: #707070;
}

/* sheet tabs */
.sheetbar {
  display: flex;
  align-items: center;
  flex: none;
  height: 32px;
  padding-bottom: 2px;
  border-top: 1px solid #d9d9d9;
}
.nav {
  width: 33px;
  height: 24px;
}
.nav:first-child {
  margin-left: 15px;
}
.sheet-tab {
  align-self: flex-start;
  width: 68px;
  height: 28px;
  margin-left: 35px;
  padding-bottom: 2px;
  border-radius: 0 0 4px 4px;
  background: #fff;
  font-size: 15px;
  box-shadow: 0 0 1px #aaa;
}
.sheet-tab span {
  padding: 0 2px;
  border-bottom: 2px solid #107c41;
  line-height: 20px;
}
.tab-sep {
  width: 1px;
  height: 18px;
  margin-left: 4px;
  background: #d1d1d1;
}
.add {
  width: 24px;
  height: 24px;
  margin-left: 35px;
}
.hdots {
  margin-left: auto;
  margin-right: 15px;
}
.hscroll {
  display: flex;
  align-items: center;
  gap: 5px;
  flex: 0 0 38%;
  height: 18px;
  margin-right: 18px;
  padding: 0 4px;
  border-radius: 8px;
  background: #f5f5f5;
}
.htrack {
  flex: 1;
}
.hthumb {
  width: 96%;
  height: 9px;
  border-radius: 5px;
  background: #707070;
}

/* status bar */
.status {
  display: flex;
  align-items: center;
  flex: none;
  height: 22px;
  padding-left: 8px;
  padding-right: 20px;
  border-top: 1px solid #c6c6c6;
  background: #f3f3f3;
}
.macro {
  margin-left: 19px;
}
.views {
  display: flex;
  align-self: stretch;
  margin-left: auto;
  margin-right: 2px;
}
.views button {
  width: 40px;
}
.on {
  background: #dedede;
}
.step {
  width: 17px;
}
.zoom {
  width: 100px;
  height: 16px;
  margin: 0;
  appearance: none;
  background: linear-gradient(#777, #777) center / 100% 1px no-repeat;
}
.zoom::-webkit-slider-thumb {
  appearance: none;
  width: 5px;
  height: 11px;
  background: #555;
}
.percent-text {
  width: 42px;
  text-align: right;
}
</style>
